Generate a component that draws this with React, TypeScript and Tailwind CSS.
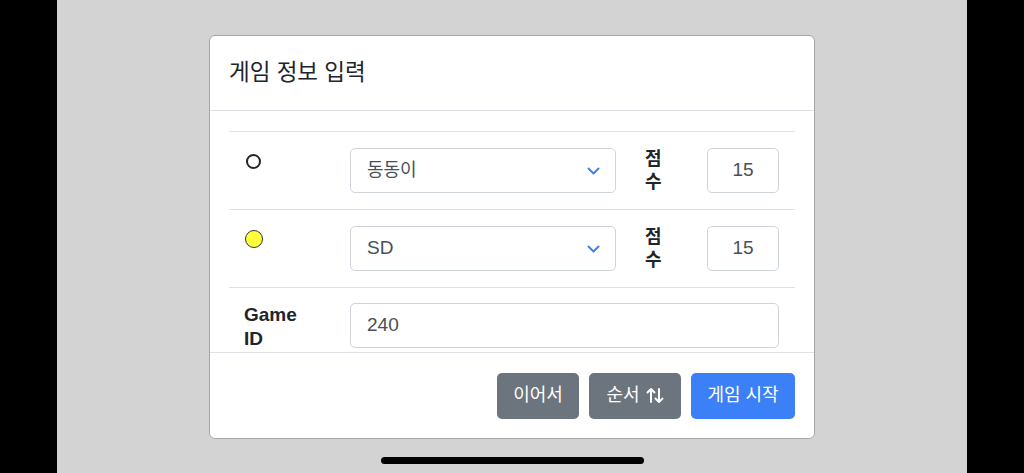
const font = { fontFamily: '"Liberation Sans", "Noto Sans CJK KR", sans-serif' };

function Chevron() {
  return (
    <svg width="13" height="8" viewBox="0 0 13 8" fill="none">
      <path d="M1.5 1.5 6.5 6.5 11.5 1.5" stroke="#3b82f6" strokeWidth="2" strokeLinecap="round" strokeLinejoin="round" />
    </svg>
  );
}

function SwapArrows() {
  return (
    <svg width="18" height="17" viewBox="0 0 18 17" fill="none" stroke="white" strokeWidth="2" strokeLinecap="round" strokeLinejoin="round">
      <path d="M5 15V2M1.5 5.5 5 2l3.5 3.5" />
      <path d="M13 2v13M9.5 11.5 13 15l3.5-3.5" />
    </svg>
  );
}

function ScoreBox({ value }: { value: string }) {
  return (
    <div className="flex h-[45px] w-[72px] items-center justify-center rounded-[5px] border border-[#ced4da] bg-white text-[19px] text-[#495057]">
      {value}
    </div>
  );
}

// one row per player: marker, name select, "점수" label, score box
function PlayerRow({ marker, name, score, korean }: { marker: React.ReactNode; name: string; score: string; korean?: boolean }) {
  return (
    <div className="grid grid-cols-[106px_296px_61px_103px] border-t border-[#dee2e6]">
      <div className="pl-[16px] pt-[20px]">{marker}</div>
      <div className="px-[15px] py-[16px]">
        <div className="flex h-[45px] w-full items-center justify-between rounded-[5px] border border-[#ced4da] bg-white pl-[16px] pr-[15px] text-[#495057]">
          <span className={korean ? "text-[18px]" : "text-[19px]"}>{name}</span>
          <Chevron />
        </div>
      </div>
      <div className="pl-[14px] pt-[16px] text-[18px] font-bold leading-[23px] text-[#212529]">
        <div>점</div>
        <div>수</div>
      </div>
      <div className="py-[16px] pl-[15px]">
        <ScoreBox value={score} />
      </div>
    </div>
  );
}

export default function App() {
  return (
    <div className="flex h-[473px] w-[1024px] overflow-hidden bg-black" style={font}>
      <div className="w-[57px] bg-black" />
      <div className="flex flex-1 flex-col bg-[#d3d3d3]">
        <div className="mx-auto mt-[35px] flex h-[404px] w-[606px] flex-col overflow-hidden rounded-[6px] border border-[#a8a8a8] bg-white">
          <div className="flex h-[75px] shrink-0 items-center border-b border-[#dee2e6] px-[19px]">
            <h5 className="text-[22.5px] text-[#212529]">게임 정보 입력</h5>
          </div>

          <div className="flex-1 overflow-hidden px-[19px] pt-[20px]">
            <PlayerRow
              marker={<div className="ml-[1px] mt-[2px] h-[15px] w-[15px] rounded-full border-2 border-[#212529]" />}
              name="동동이"
              score="15"
              korean
            />
            <PlayerRow
              marker={<div className="h-[18px] w-[18px] rounded-full border border-[#333] bg-[#ffff3c]" />}
              name="SD"
              score="15"
            />
            <div className="grid grid-cols-[106px_460px] border-t border-[#dee2e6]">
              <div className="pl-[15px] pt-[15px] text-[19px] font-bold leading-[24px] text-[#212529]">
                <div>Game</div>
                <div>ID</div>
              </div>
              <div className="py-[15px] pl-[15px] pr-[16px]">
                <div className="flex h-[45px] w-full items-center rounded-[5px] border border-[#ced4da] bg-white pl-[16px] text-[19px] text-[#495057]">
                  240
                </div>
              </div>
            </div>
          </div>

          <div className="flex h-[86px] shrink-0 items-center justify-end gap-[10px] border-t border-[#dee2e6] px-[19px]">
            <button className="flex h-[46px] w-[82px] items-center justify-center rounded-[5px] bg-[#6c757d] text-[18px] text-white">
              이어서
            </button>
            <button className="flex h-[46px] w-[92px] items-center justify-center gap-[6px] rounded-[5px] bg-[#6c757d] text-[18px] text-white">
              순서 <SwapArrows />
            </button>
            <button className="flex h-[46px] w-[104px] items-center justify-center rounded-[5px] bg-[#3b80f6] text-[18px] text-white">
              게임 시작
            </button>
          </div>
        </div>
        <div className="mx-auto mt-[18px] h-[7px] w-[263px] rounded-full bg-black" />
      </div>
      <div className="w-[57px] bg-black" />
    </div>
  );
}
